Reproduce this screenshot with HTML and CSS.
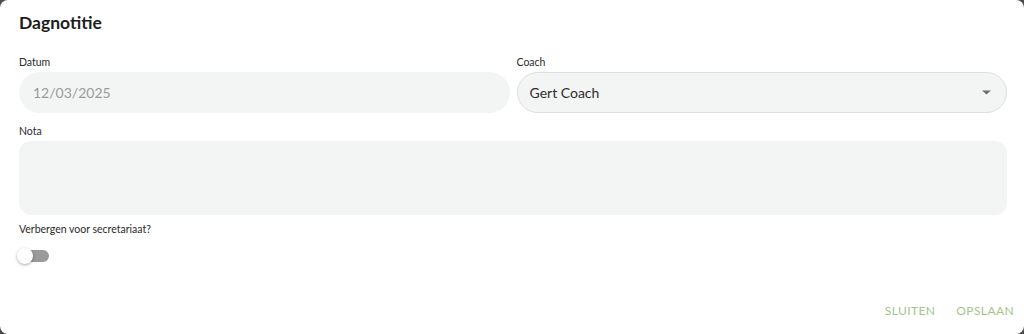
FILE: index.html
```html
<!DOCTYPE html>
<html lang="nl">
<head>
    <meta charset="UTF-8">
    <meta name="viewport" content="width=device-width, initial-scale=1.0">
    <title>Dagnotitie</title>
    <link rel="stylesheet" href="styles.css">
</head>
<body>
    <div class="dialog">
        <h2 class="dialog-title">Dagnotitie</h2>

        <div class="row">
            <div class="col">
                <label class="field-label">Datum</label>
                <div class="input input-disabled">12/03/2025</div>
            </div>
            <div class="col">
                <label class="field-label">Coach</label>
                <div class="input input-select">
                    <span>Gert Coach</span>
                    <svg class="caret" width="9" height="5" viewBox="0 0 9 5"><path d="M0 0.5h9L4.5 4.5z" fill="#6f6f6f"/></svg>
                </div>
            </div>
        </div>

        <div class="field field-nota">
            <label class="field-label">Nota</label>
            <div class="textarea"></div>
        </div>

        <div class="field field-hide">
            <label class="field-label">Verbergen voor secretariaat?</label>
            <div class="switch">
                <span class="switch-track"></span>
                <span class="switch-thumb"></span>
            </div>
        </div>

        <div class="actions">
            <button class="btn">Sluiten</button>
            <button class="btn">Opslaan</button>
        </div>
    </div>
</body>
</html>
```

FILE: styles.css
```css
body {
    margin: 0;
    padding: 0;
    background-color: #4b4b4b;
    font-family: Lato, "Noto Sans", sans-serif;
    color: #222;
}
.dialog {
    width: 1024px;
    height: 334px;
    box-sizing: border-box;
    background-color: white;
    border-radius: 8px;
    padding: 11px 17px 0 19px;
    display: flex;
    flex-direction: column;
}
.dialog-title {
    margin: 0;
    font-size: 17.5px;
    line-height: 24px;
    font-weight: 700;
    color: #1d1d1d;
}
.row {
    display: flex;
    gap: 7px;
    margin-top: 20px;
}
.col {
    flex: 1;
}
.field-label {
    display: block;
    font-size: 10.5px;
    line-height: 14px;
    color: #2b2b2b;
    margin-bottom: 3px;
}
.input {
    height: 41px;
    box-sizing: border-box;
    border-radius: 21px;
    background-color: #f3f5f4;
    padding: 0 14px;
    display: flex;
    align-items: center;
    font-size: 14px;
}
.input-disabled {
    color: #9a9a9a;
}
.input-select {
    border: 1px solid #dcdfdd;
    padding: 0 12px;
    justify-content: space-between;
    color: #2d2d2d;
}
.caret {
    margin-right: 3px;
}
.field-nota {
    margin-top: 11px;
}
.textarea {
    height: 74px;
    border-radius: 12px;
    background-color: #f3f5f4;
}
.field-hide {
    margin-top: 7px;
}
.switch {
    position: relative;
    width: 32px;
    height: 16px;
    margin-top: 12px;
    margin-left: -2px;
}
.switch-track {
    position: absolute;
    left: 8px;
    top: 2px;
    width: 24px;
    height: 12px;
    border-radius: 6px;
    background-color: #9a9a9a;
}
.switch-thumb {
    position: absolute;
    left: 0;
    top: 0;
    width: 16px;
    height: 16px;
    border-radius: 50%;
    background-color: white;
    box-shadow: 0 1px 3px rgba(0, 0, 0, 0.35);
}
.actions {
    margin-top: auto;
    margin-bottom: 11px;
    margin-right: -7px;
    display: flex;
    justify-content: flex-end;
    gap: 21px;
}
.btn {
    background: none;
    border: none;
    padding: 0;
    line-height: 24px;
    font-family: inherit;
    font-size: 12px;
    letter-spacing: 0.4px;
    text-transform: uppercase;
    color: #a3c48b;
    cursor: pointer;
}
```
